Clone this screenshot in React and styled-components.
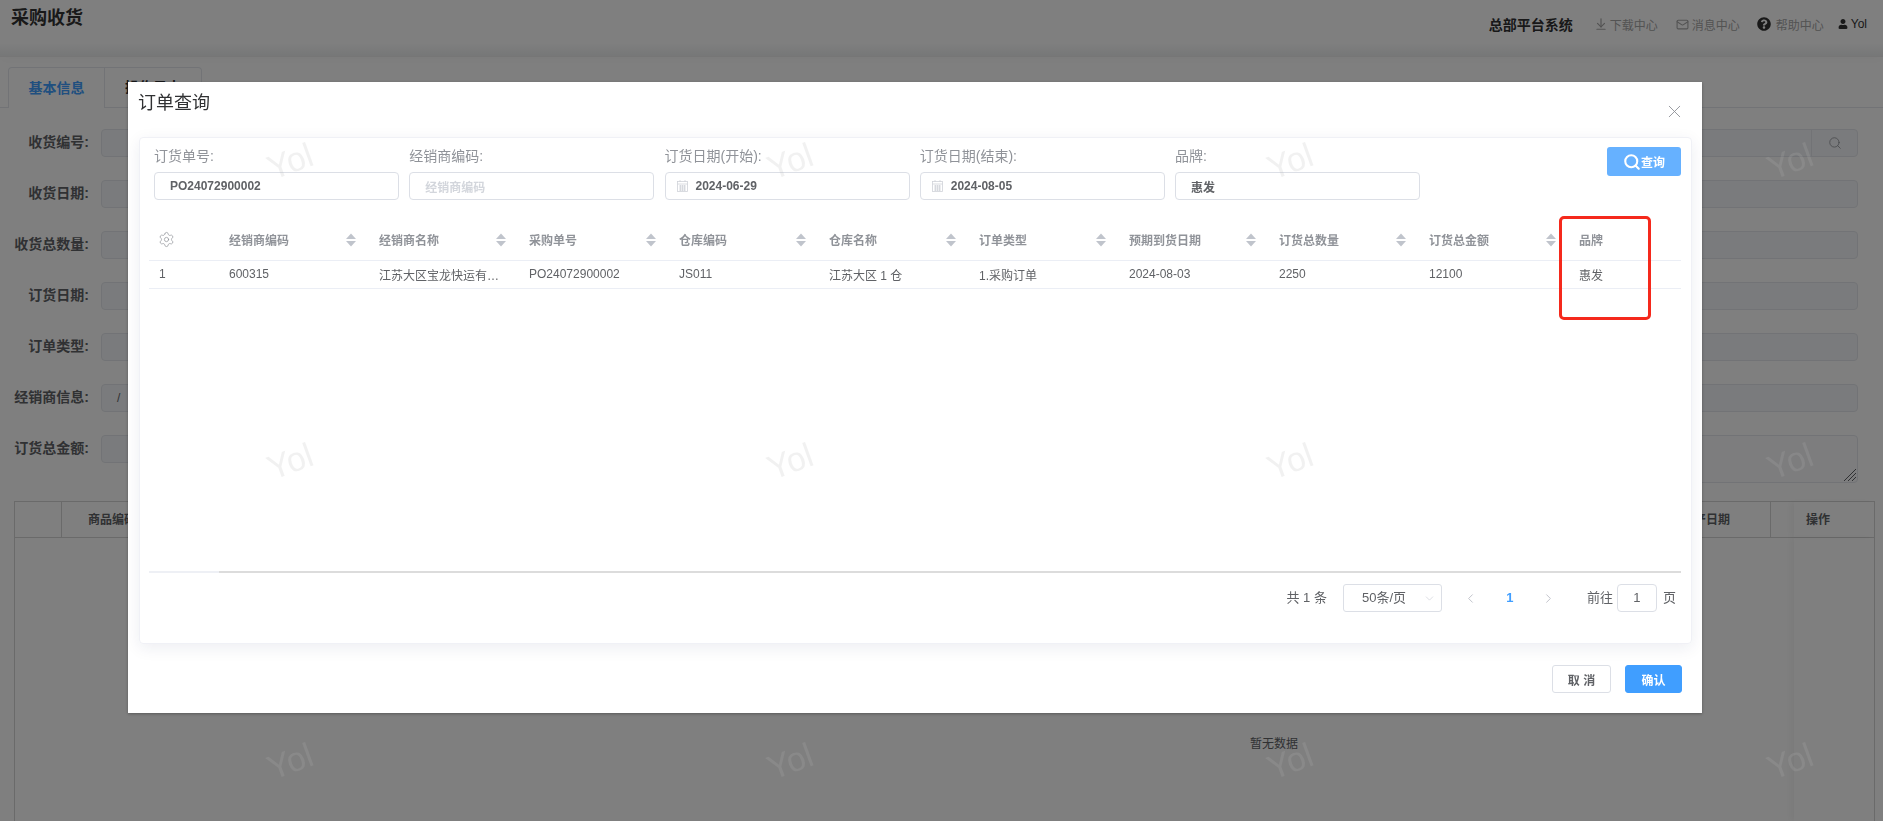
import styled, { createGlobalStyle } from 'styled-components';
import { ArrowDownToLine, ChevronDown, ChevronLeft, ChevronRight, Mail, Search, Settings, X } from 'lucide-react';
import { FaQuestionCircle, FaUser } from 'react-icons/fa';

const GlobalStyle = createGlobalStyle`
  html, body {
    margin: 0;
    height: 100%;
    overflow: hidden;
    background: #fff;
    font-family: "Liberation Sans", "Noto Sans CJK SC", sans-serif;
  }
  * {
    box-sizing: border-box;
  }
`;

const Page = styled.div`
  height: 821px;
  overflow: hidden;
  display: flex;
  flex-direction: column;
`;

const Header = styled.header`
  height: 57px;
  flex: none;
  display: flex;
  justify-content: space-between;
  align-items: flex-start;
  padding: 0 16px 0 11px;
  background: linear-gradient(#fff 76%, #edeff0);
  border-bottom: 1px solid #eceded;
  box-shadow: 0 2px 12px rgba(0, 0, 0, 0.03);
`;

const PageTitle = styled.div`
  font-size: 18px;
  line-height: 36px;
  font-weight: 700;
  color: #333;
`;

const HeaderRight = styled.div`
  height: 48px;
  display: flex;
  align-items: center;
`;

const SystemName = styled.span`
  font-size: 14px;
  font-weight: 700;
  color: #303133;
`;

const HeaderLink = styled.span`
  display: flex;
  align-items: center;
  gap: ${(p) => p.$gap}px;
  margin-left: ${(p) => p.$left}px;
  font-size: 12px;
  color: #a6a6a6;
`;

const UserName = styled(HeaderLink)`
  color: #333;
`;

const Tabs = styled.div`
  margin-top: 10px;
  height: 41px;
  flex: none;
  padding-left: 8px;
  display: flex;
  border-bottom: 1px solid #e4e7ed;
`;

const Tab = styled.div`
  width: 97px;
  height: 41px;
  padding-bottom: 3px;
  display: flex;
  align-items: center;
  justify-content: center;
  font-size: 14px;
  font-weight: 700;
  color: ${(p) => (p.$active ? '#409eff' : '#303133')};
  background: #fff;
  border: 1px solid #e4e7ed;
  border-left-width: ${(p) => (p.$active ? 1 : 0)}px;
  border-bottom-width: ${(p) => (p.$active ? 0 : 1)}px;
  border-radius: ${(p) => (p.$active ? '4px 0 0 0' : '0 4px 0 0')};
`;

const Form = styled.div`
  flex: none;
  margin-top: 21px;
  padding-right: 25px;
  display: flex;
  flex-direction: column;
  gap: 23px;
`;

const FormRow = styled.div`
  display: flex;
  align-items: flex-start;
  gap: 12px;
`;

const FormLabel = styled.label`
  width: 89px;
  flex: none;
  text-align: right;
  font-size: 14px;
  line-height: 26px;
  font-weight: 700;
  color: #606266;
  white-space: nowrap;
`;

const FormInput = styled.div`
  flex: 1;
  height: 28px;
  display: flex;
  align-items: center;
  justify-content: flex-end;
  padding-left: 15px;
  font-size: 12px;
  color: #606266;
  background: #f5f7fa;
  border: 1px solid #e4e7ed;
  border-radius: 4px;
`;

const FormValue = styled.span`
  flex: 1;
`;

const InputAppend = styled.div`
  width: 46px;
  height: 100%;
  display: flex;
  align-items: center;
  justify-content: center;
  color: #909399;
  border-left: 1px solid #e4e7ed;
`;

const AmountInput = styled(FormInput)`
  flex: 0 0 400px;
`;

const RemarkBox = styled.div`
  flex: 1;
  height: 48px;
  position: relative;
  background: #fbfbfc;
  border: 1px solid #e4e7ed;
  border-radius: 4px;
`;

const ResizeHandle = styled.svg`
  position: absolute;
  right: 1px;
  bottom: 1px;
`;

const GoodsTable = styled.div`
  flex: 1;
  margin: 18px 8px 0 14px;
  display: flex;
  flex-direction: column;
  border: 1px solid #d4d4d4;
  border-bottom: 0;
`;

const GoodsHead = styled.div`
  height: 36px;
  flex: none;
  display: grid;
  grid-template-columns: 47px 1fr 122px 23px 80px;
  border-bottom: 1px solid #d4d4d4;
`;

const GoodsHeadCell = styled.div`
  display: flex;
  align-items: center;
  padding-left: ${(p) => p.$pad || 0}px;
  padding-bottom: 2px;
  font-size: 12px;
  font-weight: 700;
  color: #606266;
  border-right: ${(p) => (p.$line ? '1px solid #d4d4d4' : '0')};
  box-shadow: ${(p) => (p.$fixed ? '-4px 0 6px rgba(0, 0, 0, 0.04)' : 'none')};
`;

const GoodsBody = styled.div`
  flex: 1;
  display: flex;
  justify-content: space-between;
`;

const EmptyText = styled.div`
  margin: 198px 0 0 1235px;
  font-size: 12px;
  line-height: 16px;
  color: #606266;
`;

const FixedColumn = styled.div`
  width: 80px;
  box-shadow: -4px 0 6px rgba(0, 0, 0, 0.04);
`;

const Overlay = styled.div`
  position: fixed;
  inset: 0;
  background: rgba(0, 0, 0, 0.5);
`;

const Modal = styled.div`
  position: fixed;
  left: 128px;
  top: 82px;
  width: 1574px;
  height: 631px;
  display: flex;
  flex-direction: column;
  padding: 0 10px 0 11px;
  background: #fff;
  box-shadow: 0 1px 3px rgba(0, 0, 0, 0.3);
`;

const ModalHead = styled.div`
  height: 55px;
  flex: none;
  display: flex;
  justify-content: space-between;
  padding-right: 7px;
`;

const ModalTitle = styled.div`
  margin: 9px 0 0 -1px;
  font-size: 18px;
  line-height: 24px;
  color: #303133;
`;

const CloseIcon = styled(X)`
  margin-top: 19px;
  color: #8b8e94;
`;

const Card = styled.div`
  height: 507px;
  flex: none;
  padding: 0 10px 0 9px;
  border: 1px solid #f0f1f6;
  border-radius: 4px;
  box-shadow: 0 4px 16px rgba(30, 40, 90, 0.08);
`;

const FilterBar = styled.div`
  height: 83px;
  padding: 6px 0 0 5px;
  display: flex;
  justify-content: space-between;
  align-items: flex-start;
`;

const FilterFields = styled.div`
  display: grid;
  grid-template-columns: repeat(5, 245px);
  column-gap: 10.25px;
`;

const FieldLabel = styled.div`
  height: 24px;
  margin-bottom: 4px;
  font-size: 14px;
  line-height: 24px;
  color: #909399;
`;

const FieldBox = styled.div`
  height: 28px;
  display: flex;
  align-items: center;
  gap: 8px;
  padding-left: ${(p) => (p.$date ? 11 : 15)}px;
  font-size: 12px;
  font-weight: 700;
  color: ${(p) => (p.$placeholder ? '#d3d6dc' : '#606266')};
  border: 1px solid #dcdfe6;
  border-radius: 4px;
`;

const QueryButton = styled.button`
  width: 74px;
  height: 29px;
  margin-top: 3px;
  padding: 0;
  display: flex;
  align-items: center;
  justify-content: center;
  font: 700 12px "Liberation Sans", "Noto Sans CJK SC", sans-serif;
  color: #fff;
  background: #66b1ff;
  border: 0;
  border-radius: 3px;
`;

const TableArea = styled.div`
  height: 350px;
`;

const TableRow = styled.div`
  display: grid;
  grid-template-columns: 70px repeat(9, 150px) 1fr;
  height: ${(p) => (p.$head ? 40 : 28)}px;
  padding-bottom: ${(p) => (p.$head ? 2 : 1)}px;
  border-bottom: 1px solid #ebeef5;
  font-size: 12px;
  font-weight: ${(p) => (p.$head ? 700 : 400)};
  color: ${(p) => (p.$head ? '#909399' : '#606266')};
`;

const TableCell = styled.div`
  display: flex;
  align-items: center;
  justify-content: space-between;
  min-width: 0;
  padding: 0 13px 0 10px;
`;

const CellText = styled.span`
  display: block;
  width: 125px;
  overflow: hidden;
  white-space: nowrap;
  text-overflow: ellipsis;
`;

const GearIcon = styled(Settings)`
  margin-left: -1px;
`;

const ScrollLine = styled.div`
  height: 2px;
  display: grid;
  grid-template-columns: 70px 1fr;
  background: #dcdcdc;
`;

const ScrollLineFixed = styled.div`
  background: #eef0f5;
`;

const Pagination = styled.div`
  height: 55px;
  padding: 11px 5px 0 0;
  display: flex;
  justify-content: flex-end;
  align-items: flex-start;
  font-size: 13px;
  line-height: 28px;
  color: #606266;
`;

const PageSize = styled.div`
  width: 99px;
  height: 28px;
  margin: 0 14px 0 16px;
  padding: 0 5px 0 18px;
  display: flex;
  align-items: center;
  justify-content: space-between;
  border: 1px solid #dcdfe6;
  border-radius: 3px;
`;

const Pager = styled.div`
  display: flex;
  gap: 9px;
  margin-right: 23px;
`;

const PagerItem = styled.div`
  width: 30px;
  height: 28px;
  display: flex;
  align-items: center;
  justify-content: center;
  font-weight: 700;
  color: ${(p) => (p.$active ? '#409eff' : '#b9bcc4')};
`;

const JumpInput = styled.div`
  width: 40px;
  height: 28px;
  margin: 0 6px 0 4px;
  text-align: center;
  line-height: 26px;
  border: 1px solid #dcdfe6;
  border-radius: 4px;
`;

const ModalFooter = styled.div`
  margin-top: 21px;
  display: flex;
  justify-content: flex-end;
  gap: 14px;
  padding-right: 10px;
`;

const FooterButton = styled.button`
  width: ${(p) => (p.$primary ? 57 : 59)}px;
  height: 28px;
  padding: 0;
  font: 700 12px "Liberation Sans", "Noto Sans CJK SC", sans-serif;
  color: ${(p) => (p.$primary ? '#fff' : '#606266')};
  background: ${(p) => (p.$primary ? '#409eff' : '#fff')};
  border: 1px solid ${(p) => (p.$primary ? '#409eff' : '#dcdfe6')};
  border-radius: 3px;
`;

const RedBox = styled.div`
  position: absolute;
  left: 1431px;
  top: 134px;
  width: 92px;
  height: 104px;
  border: 3px solid #f5291c;
  border-radius: 5px;
`;

const Watermarks = styled.div`
  position: fixed;
  inset: 0;
  overflow: hidden;
  pointer-events: none;
  padding: 11px 0 0 40px;
  display: grid;
  grid-template-columns: repeat(4, 500px);
  grid-auto-rows: 300px;
`;

const Watermark = styled.div`
  display: flex;
  align-items: center;
  justify-content: center;
  font-size: 34px;
  color: rgba(180, 180, 180, 0.19);
  transform: rotate(-20deg);
`;

const SortIcon = () => (
  <svg width="10" height="14" viewBox="0 0 10 14" fill="#c0c4cc">
    <path d="M5 0.5 10 6H0z" />
    <path d="M0 8h10l-5 5.5z" />
  </svg>
);

const CalendarIcon = () => (
  <svg width="11" height="12" viewBox="0 0 11 12" fill="none" stroke="#d0d3d9" strokeWidth="0.8">
    <rect x="0.5" y="1.5" width="10" height="10" />
    <path d="M0.5 4h10M3 0v2M8 0v2M2 6h7M2 8h7M2 10h7M3.5 5v6M5.5 5v6M7.5 5v6" />
  </svg>
);

const formRows = ['收货编号:', '收货日期:', '收货总数量:', '订货日期:', '订单类型:', '经销商信息:'];

const filters = [
  { label: '订货单号:', value: 'PO24072900002' },
  { label: '经销商编码:', value: '经销商编码', placeholder: true },
  { label: '订货日期(开始):', value: '2024-06-29', date: true },
  { label: '订货日期(结束):', value: '2024-08-05', date: true },
  { label: '品牌:', value: '惠发' },
];

const columns = ['经销商编码', '经销商名称', '采购单号', '仓库编码', '仓库名称', '订单类型', '预期到货日期', '订货总数量', '订货总金额'];
const rowValues = ['600315', '江苏大区宝龙快运有限公司', 'PO24072900002', 'JS011', '江苏大区 1 仓', '1.采购订单', '2024-08-03', '2250', '12100', '惠发'];

export default function App() {
  return (
    <>
      <GlobalStyle />
      <Page>
        <Header>
          <PageTitle>采购收货</PageTitle>
          <HeaderRight>
            <SystemName>总部平台系统</SystemName>
            <HeaderLink $left={21} $gap={2}>
              <ArrowDownToLine size={14} />
              下载中心
            </HeaderLink>
            <HeaderLink $left={18} $gap={3}>
              <Mail size={13} />
              消息中心
            </HeaderLink>
            <HeaderLink $left={17} $gap={5}>
              <FaQuestionCircle size={14} color="#333" />
              帮助中心
            </HeaderLink>
            <UserName $left={14} $gap={3}>
              <FaUser size={10} />
              Yol
            </UserName>
          </HeaderRight>
        </Header>
        <Tabs>
          <Tab $active>基本信息</Tab>
          <Tab>操作日志</Tab>
        </Tabs>
        <Form>
          {formRows.map((label, i) => (
            <FormRow key={label}>
              <FormLabel>{label}</FormLabel>
              <FormInput>
                <FormValue>{i === 5 ? '/' : ''}</FormValue>
                {i === 0 && (
                  <InputAppend>
                    <Search size={14} strokeWidth={1.4} />
                  </InputAppend>
                )}
              </FormInput>
            </FormRow>
          ))}
          <FormRow>
            <FormLabel>订货总金额:</FormLabel>
            <AmountInput />
            <RemarkBox>
              <ResizeHandle width="13" height="13" viewBox="0 0 13 13" stroke="#606266" strokeWidth="1">
                <path d="M1 13 13 1M5 13l8-8M9 13l4-4" />
              </ResizeHandle>
            </RemarkBox>
          </FormRow>
        </Form>
        <GoodsTable>
          <GoodsHead>
            <GoodsHeadCell $line />
            <GoodsHeadCell $pad={26}>商品编码</GoodsHeadCell>
            <GoodsHeadCell $pad={33} $line>生产日期</GoodsHeadCell>
            <GoodsHeadCell />
            <GoodsHeadCell $pad={12} $fixed>操作</GoodsHeadCell>
          </GoodsHead>
          <GoodsBody>
            <EmptyText>暂无数据</EmptyText>
            <FixedColumn />
          </GoodsBody>
        </GoodsTable>
      </Page>

      <Overlay />

      <Modal>
        <ModalHead>
          <ModalTitle>订单查询</ModalTitle>
          <CloseIcon size={21} strokeWidth={1} />
        </ModalHead>
        <Card>
          <FilterBar>
            <FilterFields>
              {filters.map((f) => (
                <div key={f.label}>
                  <FieldLabel>{f.label}</FieldLabel>
                  <FieldBox $date={f.date} $placeholder={f.placeholder}>
                    {f.date && <CalendarIcon />}
                    {f.value}
                  </FieldBox>
                </div>
              ))}
            </FilterFields>
            <QueryButton>
              <Search size={18} strokeWidth={2.8} />
              查询
            </QueryButton>
          </FilterBar>
          <TableArea>
            <TableRow $head>
              <TableCell>
                <GearIcon size={17} strokeWidth={1} />
              </TableCell>
              {columns.map((c) => (
                <TableCell key={c}>
                  {c}
                  <SortIcon />
                </TableCell>
              ))}
              <TableCell>品牌</TableCell>
            </TableRow>
            <TableRow>
              <TableCell>1</TableCell>
              {rowValues.map((v) => (
                <TableCell key={v}>
                  <CellText>{v}</CellText>
                </TableCell>
              ))}
            </TableRow>
          </TableArea>
          <ScrollLine>
            <ScrollLineFixed />
          </ScrollLine>
          <Pagination>
            共 1 条
            <PageSize>
              50条/页
              <ChevronDown size={13} strokeWidth={1} color="#c0c4cc" />
            </PageSize>
            <Pager>
              <PagerItem>
                <ChevronLeft size={15} strokeWidth={1.4} />
              </PagerItem>
              <PagerItem $active>1</PagerItem>
              <PagerItem>
                <ChevronRight size={15} strokeWidth={1.4} />
              </PagerItem>
            </Pager>
            前往
            <JumpInput>1</JumpInput>页
          </Pagination>
        </Card>
        <ModalFooter>
          <FooterButton>取 消</FooterButton>
          <FooterButton $primary>确认</FooterButton>
        </ModalFooter>
        <RedBox />
      </Modal>

      <Watermarks>
        {Array.from({ length: 12 }, (_, i) => (
          <Watermark key={i}>Yol</Watermark>
        ))}
      </Watermarks>
    </>
  );
}
